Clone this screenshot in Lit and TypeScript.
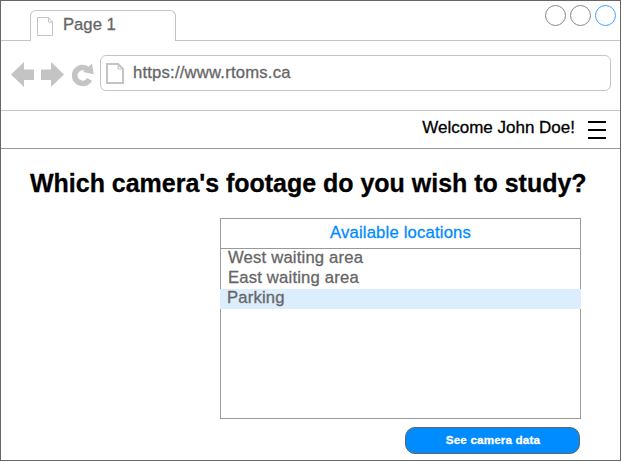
import { LitElement, html, css, svg } from "lit";
import { customElement, property, state } from "lit/decorators.js";
import { classMap } from "lit/directives/class-map.js";

@customElement("browser-chrome")
class BrowserChrome extends LitElement {
  @property() tab = "";
  @property() url = "";

  static styles = css`
    :host {
      display: block;
      color: #666;
    }
    svg {
      display: block;
      flex: none;
    }
    .tabs {
      display: flex;
      height: 40px;
      box-sizing: border-box;
    }
    .lead {
      width: 29px;
      border-bottom: 1px solid #c4c4c4;
      box-sizing: border-box;
    }
    .tab {
      display: flex;
      width: 146px;
      height: 31px;
      margin-top: 9px;
      box-sizing: border-box;
      border: 1px solid #c4c4c4;
      border-bottom: 0;
      border-radius: 6px 6px 0 0;
      padding: 6px 0 0 6px;
    }
    .title {
      font-size: 16.67px;
      line-height: 20px;
      margin: -2px 0 0 9px;
    }
    .rest {
      flex: 1;
      display: flex;
      justify-content: flex-end;
      gap: 4px;
      padding: 4px 4px 0 0;
      border-bottom: 1px solid #c4c4c4;
      box-sizing: border-box;
    }
    .dot {
      width: 21px;
      height: 21px;
      box-sizing: border-box;
      border: 1px solid #868686;
      border-radius: 50%;
    }
    .dot.active {
      border-color: #3ba3ff;
    }
    .bar {
      display: flex;
      height: 70px;
      box-sizing: border-box;
      border-bottom: 1px solid #c4c4c4;
      padding: 14px 9px 0 9px;
    }
    .nav {
      width: 90px;
      height: 36px;
    }
    .address {
      flex: 1;
      display: flex;
      height: 36px;
      box-sizing: border-box;
      border: 1px solid #c4c4c4;
      border-radius: 6px;
      padding: 7px 0 0 5px;
    }
    .url {
      font-size: 16.67px;
      line-height: 20px;
      letter-spacing: 0.2px;
      margin-left: 9px;
    }
  `;

  render() {
    return html`
      <div class="tabs">
        <div class="lead"></div>
        <div class="tab">
          <svg width="17" height="20" fill="none" stroke="#c4c4c4">
            <path d="M.5 .5H11.5L15.5 5V18.5H.5ZM11.5 .5V5H15.5" />
          </svg>
          <span class="title">${this.tab}</span>
        </div>
        <div class="rest">
          <span class="dot"></span><span class="dot"></span><span class="dot active"></span>
        </div>
      </div>
      <div class="bar">
        <svg class="nav" viewBox="10 55 90 36" fill="#c4c4c4">
          <path d="M11 74.5L24 62V69.5H34V80H24V87Z" />
          <path d="M64 74.5L51 62V69.5H41V80H51V87Z" />
          <path
            d="M87.8 69.3A8 8 0 1 0 89.7 79.3"
            fill="none"
            stroke="#c4c4c4"
            stroke-width="5.6"
          />
          <path d="M92 63.5L93.8 74.2L83 72Z" />
        </svg>
        <div class="address">
          <svg width="18" height="22" fill="none" stroke="#c4c4c4" stroke-width="2">
            <path d="M1 1H12.2L17 6V20H1Z" /><path d="M12.2 1V6H17" stroke-width="1.2" />
          </svg>
          <span class="url">${this.url}</span>
        </div>
      </div>
    `;
  }
}

@customElement("app-root")
class AppRoot extends LitElement {
  @state() private selected = 2;
  private locations = ["West waiting area", "East waiting area", "Parking"];

  static styles = css`
    :host {
      display: block;
      width: 622px;
      height: 462px;
      background: #fff;
      font-family: "Liberation Sans", Arial, sans-serif;
      -webkit-text-stroke: 0.3px currentColor;
      white-space: nowrap;
      overflow: hidden;
    }
    .window {
      width: 621px;
      height: 461px;
      box-sizing: border-box;
      border: 1px solid #666;
    }
    .user {
      display: flex;
      justify-content: flex-end;
      height: 38px;
      box-sizing: border-box;
      border-bottom: 1px solid #999;
      padding: 7px 14px 0 0;
      font-size: 17px;
      line-height: 20px;
      color: #000;
    }
    .menu {
      margin: 3px 0 0 13px;
      width: 18px;
      height: 18px;
    }
    h1 {
      margin: 19px 0 0 29px;
      font-size: 25px;
      line-height: 30px;
      font-weight: bold;
      letter-spacing: -0.02px;
    }
    .list {
      width: 361px;
      height: 201px;
      box-sizing: border-box;
      margin: 20px 0 0 219px;
      border: 1px solid #999;
      color: #666;
      font-size: 16.67px;
      letter-spacing: 0.18px;
    }
    .header {
      height: 30px;
      box-sizing: border-box;
      border-bottom: 1px solid #999;
      text-align: center;
      line-height: 27px;
      color: #008cff;
    }
    .row {
      height: 20px;
      line-height: 18px;
      padding-left: 7px;
    }
    .row.selected {
      background: #dcedfe;
      margin: 0 -1px;
    }
    .go {
      display: block;
      width: 175px;
      height: 27px;
      box-sizing: border-box;
      margin: 8px 0 0 404px;
      padding: 0 0 1px 1px;
      border: 1px solid #666;
      border-radius: 10px;
      background: #008cff;
      color: #fff;
      font: bold 11.67px/22px "Liberation Sans", Arial, sans-serif;
      letter-spacing: 0.16px;
    }
  `;

  render() {
    return html`
      <div class="window">
        <browser-chrome tab="Page 1" url="https://www.rtoms.ca"></browser-chrome>
        <div class="user">
          <span>Welcome John Doe!</span>
          <svg class="menu" viewBox="0 0 18 18">
            ${[0, 8, 16].map((y) => svg`<rect y=${y} width="18" height="2" />`)}
          </svg>
        </div>
        <h1>Which camera's footage do you wish to study?</h1>
        <div class="list">
          <div class="header">Available locations</div>
          ${this.locations.map(
            (name, i) => html`<div
              class=${classMap({ row: true, selected: i === this.selected })}
              @click=${() => (this.selected = i)}
            >${name}</div>`
          )}
        </div>
        <button class="go">See camera data</button>
      </div>
    `;
  }
}
